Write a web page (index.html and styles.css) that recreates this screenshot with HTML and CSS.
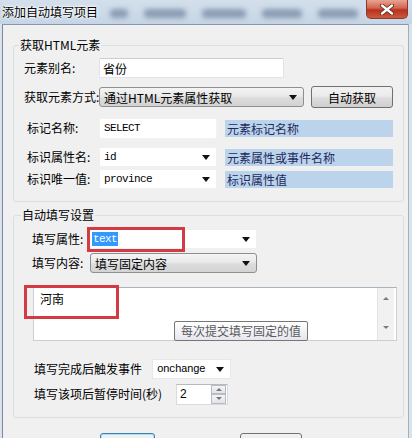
FILE: index.html
```html
<!DOCTYPE html>
<html lang="zh-CN">
<head>
    <meta charset="UTF-8">
    <title>添加自动填写项目</title>
    <link rel="stylesheet" href="styles.css">
</head>
<body>
    <div class="window">
        <!-- 标题栏 -->
        <div class="titlebar">
            <span class="title">添加自动填写项目</span>
            <div class="haze"><i class="h1"></i><i class="h2"></i><i class="h3"></i><i class="h4"></i><i class="h5"></i></div>
            <div class="close">
                <svg width="14" height="11" viewBox="0 0 14 11">
                    <path d="M2 1.5 L12 9.5 M12 1.5 L2 9.5" stroke="#5a2019" stroke-width="4" stroke-linecap="round"/>
                    <path d="M2 1.5 L12 9.5 M12 1.5 L2 9.5" stroke="#fff" stroke-width="2.4" stroke-linecap="round"/>
                </svg>
            </div>
        </div>

        <div class="frame">
            <div class="client">
                <!-- 获取HTML元素 -->
                <fieldset class="group group-get">
                    <legend>获取HTML元素</legend>
                    <div class="rows">
                        <div class="row">
                            <span class="lbl lbl-get">元素别名:</span>
                            <div class="edit edit-alias">省份</div>
                        </div>
                        <div class="row row-mode">
                            <span class="lbl lbl-get">获取元素方式:</span>
                            <div class="combo-gray combo-mode">通过HTML元素属性获取<span class="arrow"></span></div>
                            <button class="btn btn-auto">自动获取</button>
                        </div>
                        <div class="row row-tag">
                            <span class="lbl lbl-get lbl-in">标记名称:</span>
                            <div class="edit edit-short mono">SELECT</div>
                            <div class="hint">元素标记名称</div>
                        </div>
                        <div class="row row-attr">
                            <span class="lbl lbl-get lbl-in">标识属性名:</span>
                            <div class="combo-white edit-short mono">id<span class="arrow"></span></div>
                            <div class="hint">元素属性或事件名称</div>
                        </div>
                        <div class="row">
                            <span class="lbl lbl-get lbl-in">标识唯一值:</span>
                            <div class="combo-white edit-short mono">province<span class="arrow"></span></div>
                            <div class="hint">标识属性值</div>
                        </div>
                    </div>
                </fieldset>

                <!-- 自动填写设置 -->
                <fieldset class="group group-fill">
                    <legend>自动填写设置</legend>
                    <div class="rows">
                        <div class="row">
                            <span class="lbl lbl-prop">填写属性:</span>
                            <div class="combo-white combo-prop mono"><span class="sel">text</span><span class="arrow"></span>
                                <div class="mark mark-prop"></div>
                            </div>
                        </div>
                        <div class="row row-content">
                            <span class="lbl lbl-content">填写内容:</span>
                            <div class="combo-gray combo-content">填写固定内容<span class="arrow"></span></div>
                        </div>
                        <div class="memo">
                            <div class="memo-text">河南</div>
                            <div class="scroll">
                                <span class="sarrow up"></span>
                                <span class="sarrow down"></span>
                            </div>
                            <div class="mark mark-memo"></div>
                            <div class="tip">每次提交填写固定的值</div>
                        </div>
                        <div class="row row-event">
                            <span class="lbl lbl-event">填写完成后触发事件</span>
                            <div class="combo-white combo-event mono">onchange<span class="arrow"></span></div>
                        </div>
                        <div class="row row-pause">
                            <span class="lbl lbl-pause">填写该项后暂停时间(秒)</span>
                            <div class="spin">
                                <span class="spin-val">2</span>
                                <div class="spin-btns">
                                    <span class="spin-btn"><i class="tri-up"></i></span>
                                    <span class="spin-btn"><i class="tri-down"></i></span>
                                </div>
                            </div>
                        </div>
                    </div>
                </fieldset>

                <!-- 底部按钮（只露出顶边） -->
                <div class="footer">
                    <button class="btn btn-ok" title="确定"></button>
                    <button class="btn btn-cancel" title="取消"></button>
                </div>
            </div>
        </div>
    </div>
</body>
</html>
```

FILE: styles.css
```css
* {
    box-sizing: border-box;
}
body {
    margin: 0;
    font-family: "Noto Sans CJK SC", sans-serif;
    font-size: 12px;
    color: #000;
    background: #dfe7ef;
}
.window {
    width: 412px;
    height: 438px;
    overflow: hidden;
    display: flex;
    flex-direction: column;
    background: #d9e3ed;
}

/* 标题栏 */
.titlebar {
    height: 24px;
    flex: none;
    display: flex;
    align-items: flex-start;
    background: linear-gradient(#d3dfeb, #c6d5e5);
}
.title {
    padding: 3px 0 0 2px;
    line-height: 17px;
    white-space: nowrap;
    text-shadow: 0 0 5px #fff, 0 0 3px #fff, 0 0 2px #fff;
}
.haze {
    flex: 1;
    display: flex;
    gap: 16px;
    padding: 9px 0 0 12px;
}
.haze i {
    height: 9px;
    border-radius: 4px;
    background: rgba(60, 84, 118, 0.45);
    filter: blur(2.5px);
}
.haze .h1 { width: 18px; }
.haze .h2 { width: 42px; }
.haze .h3 { width: 44px; }
.haze .h4 { width: 40px; }
.haze .h5 { width: 40px; }
.close {
    width: 42px;
    height: 19px;
    margin-right: 4px;
    flex: none;
    display: flex;
    align-items: center;
    justify-content: center;
    border: 1px solid #8a3a30;
    border-top: none;
    border-radius: 0 0 5px 5px;
    background: linear-gradient(#e8a493, #d2634e 45%, #b8321d 55%, #cc5a3e);
}

.frame {
    flex: 1;
    display: flex;
    padding: 0 3px 0 2px;
}
.client {
    flex: 1;
    background: #f0f0f0;
    border-top: 1px solid #8797aa;
    border-left: 1px solid #7d8995;
    border-right: 1px solid #a3afbb;
}

/* 分组框 */
.group {
    margin: 0 4px 0 10px;
    padding: 0;
    min-width: 0;
    border: 1px solid #d5dfe5;
    border-radius: 3px;
}
.group legend {
    padding: 0 1px;
    line-height: 16px;
}
.group-get {
    margin-top: 12px;
}
.group-get legend {
    margin-left: 5px;
}
.group-get .rows {
    padding: 4px 0 11px 10px;
}
.group-fill {
    margin-top: 5px;
}
.group-fill legend {
    margin-left: 7px;
}
.group-fill .rows {
    padding: 5px 0 12px 18px;
}

.row {
    display: flex;
    align-items: center;
    height: 22px;
}
.row-mode { margin-top: 7px; }
.row-tag { margin-top: 9px; }
.row-attr { margin-top: 7px; }
.row-content { margin-top: 2px; }
.row-event { margin-top: 17px; }
.row-pause { margin-top: 3px; }

.lbl {
    flex: none;
    white-space: nowrap;
    line-height: 16px;
}
.lbl-get { width: 75px; }
.lbl-in { padding-left: 3px; }
.lbl-prop { width: 55px; }
.lbl-content { width: 58px; }
.lbl-event { width: 118px; margin-left: 2px; }
.lbl-pause { width: 142px; margin-left: 2px; }

.mono {
    font-family: "Liberation Mono", monospace;
    font-size: 11px;
    letter-spacing: -0.6px;
}

/* 输入框与下拉框 */
.edit {
    height: 20px;
    padding-left: 3px;
    display: flex;
    align-items: center;
    background: #fff;
    border: 1px solid #e2e3ea;
    border-top-color: #c9ccd3;
    border-radius: 2px;
}
.edit-alias { width: 185px; }
.edit-short {
    width: 118px;
    height: 21px;
}
.edit.mono {
    padding-left: 4px;
    border-color: #f2f2f2;
}
.combo-white {
    position: relative;
    height: 20px;
    padding-left: 4px;
    display: flex;
    align-items: center;
    background: #fff;
    border: 1px solid #f0f0f0;
}
.combo-gray {
    position: relative;
    height: 20px;
    padding-left: 4px;
    display: flex;
    align-items: center;
    border: 1px solid #8e8f8f;
    border-radius: 3px;
    background: linear-gradient(#f4f4f4, #e9e9e9 45%, #dcdcdc 55%, #d3d3d3);
}
.combo-mode { width: 205px; }
.combo-prop { width: 170px; }
.combo-content { width: 167px; }
.combo-event {
    width: 79px;
    height: 20px;
    border: 1px solid #e8e8e8;
}
.arrow {
    margin-left: auto;
    margin-right: 6px;
    width: 0;
    height: 0;
    border-left: 4px solid transparent;
    border-right: 4px solid transparent;
    border-top: 5px solid #111;
}
.sel {
    background: #3399ff;
    color: #fff;
    padding: 0 1px;
    line-height: 14px;
}

.btn {
    font-family: "Noto Sans CJK SC", sans-serif;
    font-size: 12px;
    color: #000;
    border: 1px solid #707070;
    border-radius: 3px;
    background: linear-gradient(#f2f2f2, #ebebeb 45%, #dddddd 55%, #cfcfcf);
    padding: 0;
}
.btn-auto {
    width: 82px;
    height: 22px;
    margin-left: 7px;
}

.hint {
    width: 168px;
    height: 17px;
    margin-left: 8px;
    padding-left: 2px;
    line-height: 17px;
    background: #bcd3ec;
    color: #1d2b5c;
    white-space: nowrap;
}

/* 多行文本 */
.memo {
    position: relative;
    width: 364px;
    height: 54px;
    margin: 13px 0 0 1px;
    display: flex;
    background: #fff;
    border: 1px solid #c7ced6;
    border-top-color: #a9b4bf;
}
.memo-text {
    flex: 1;
    padding: 2px 0 0 6px;
    line-height: 17px;
}
.scroll {
    width: 17px;
    display: flex;
    flex-direction: column;
    justify-content: space-between;
    align-items: center;
    padding: 9px 0 11px;
    background: #f1f1f1;
    border-left: 1px solid #e4e4e4;
    margin-right: 2px;
}
.sarrow {
    width: 0;
    height: 0;
    border-left: 3px solid transparent;
    border-right: 3px solid transparent;
}
.sarrow.up { border-bottom: 3px solid #7a7a7a; }
.sarrow.down { border-top: 3px solid #7a7a7a; }

.tip {
    position: absolute;
    left: 140px;
    top: 33px;
    width: 134px;
    height: 20px;
    line-height: 18px;
    text-align: center;
    color: #5a5a5a;
    background: linear-gradient(#ffffff, #e6e7ee);
    border: 1px solid #767676;
    border-radius: 2px;
    white-space: nowrap;
}

/* 红色标注框 */
.mark {
    position: absolute;
    border: 3px solid #d23a44;
}
.mark-prop {
    left: -1px;
    top: -3px;
    width: 98px;
    height: 25px;
}
.mark-memo {
    left: -10px;
    top: -3px;
    width: 95px;
    height: 34px;
}

/* 数字框 */
.spin {
    width: 52px;
    height: 21px;
    display: flex;
    align-items: center;
    background: #fff;
    border: 1px solid #d8dbe0;
    border-top-color: #b5bac2;
}
.spin-val {
    flex: 1;
    padding-left: 3px;
    font-family: "Liberation Sans", sans-serif;
}
.spin-btns {
    width: 15px;
    height: 19px;
    margin-right: 1px;
    display: flex;
    flex-direction: column;
}
.spin-btn {
    flex: 1;
    display: flex;
    align-items: center;
    justify-content: center;
    border: 1px solid #b6bcc3;
    background: linear-gradient(#f5f5f5, #e3e3e3);
}
.tri-up, .tri-down {
    width: 0;
    height: 0;
    border-left: 3px solid transparent;
    border-right: 3px solid transparent;
}
.tri-up { border-bottom: 3px solid #6e7a86; }
.tri-down { border-top: 3px solid #6e7a86; }

/* 底部按钮 */
.footer {
    display: flex;
    gap: 85px;
    padding: 15px 0 0 97px;
}
.btn-ok {
    width: 55px;
    height: 23px;
    border-color: #3c7fb1;
    box-shadow: inset 0 0 0 1px #a8e2f5;
}
.btn-cancel {
    width: 62px;
    height: 23px;
}
```
